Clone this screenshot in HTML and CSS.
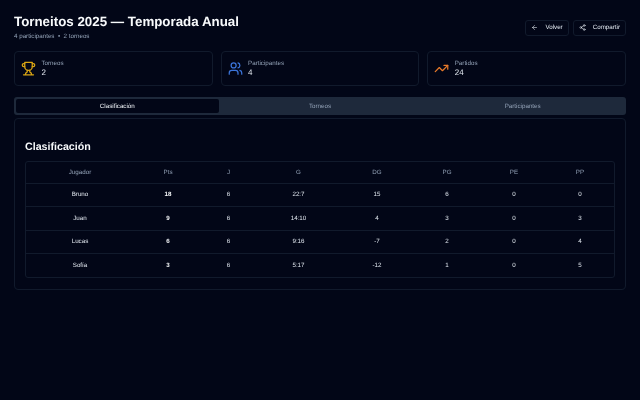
FILE: index.html
```html
<!DOCTYPE html>
<html lang="es">
<head>
<meta charset="utf-8">
<title>Torneitos 2025</title>
<link rel="stylesheet" href="styles.css">
</head>
<body>
<main class="page">
  <header class="top">
    <div class="heading">
      <h1>Torneitos 2025 — Temporada Anual</h1>
      <p>4 participantes &nbsp;•&nbsp; 2 torneos</p>
    </div>
    <div class="actions">
      <button class="btn"><svg class="ico-sm" viewBox="0 0 24 24"><path d="M19 12H5M12 19l-7-7 7-7"/></svg>Volver</button>
      <button class="btn"><svg class="ico-sm" viewBox="0 0 24 24"><circle cx="18" cy="5" r="3"/><circle cx="6" cy="12" r="3"/><circle cx="18" cy="19" r="3"/><path d="M8.600 13.500l6.800 4M15.400 6.500l-6.800 4"/></svg>Compartir</button>
    </div>
  </header>

  <section class="stats">
    <div class="card">
      <svg class="ico trophy" viewBox="0 0 24 24"><path d="M6 9H4.500a2.500 2.500 0 0 1 0-5H6M18 9h1.500a2.500 2.500 0 0 0 0-5H18M4 22h16M10 14.660V17c0 .55-.47.98-.97 1.210C7.850 18.750 7 20.240 7 22M14 14.660V17c0 .55.47.98.97 1.210C16.150 18.750 17 20.240 17 22"/><path d="M18 2H6v7a6 6 0 0 0 12 0V2z"/></svg>
      <div><div class="label">Torneos</div><div class="value">2</div></div>
    </div>
    <div class="card">
      <svg class="ico users" viewBox="0 0 24 24"><path d="M16 21v-2a4 4 0 0 0-4-4H6a4 4 0 0 0-4 4v2"/><circle cx="9" cy="7" r="4"/><path d="M22 21v-2a4 4 0 0 0-3-3.870M16 3.130a4 4 0 0 1 0 7.750"/></svg>
      <div><div class="label">Participantes</div><div class="value">4</div></div>
    </div>
    <div class="card">
      <svg class="ico trend" viewBox="0 0 24 24"><path d="M22 7l-8.500 8.500-5-5L2 17"/><path d="M16 7h6v6"/></svg>
      <div><div class="label">Partidos</div><div class="value">24</div></div>
    </div>
  </section>

  <nav class="tabs">
    <div class="tab active">Clasificación</div>
    <div class="tab">Torneos</div>
    <div class="tab">Participantes</div>
  </nav>

  <section class="panel">
    <h2>Clasificación</h2>
    <div class="table-wrap">
      <table>
        <colgroup>
          <col class="c1"><col class="c2"><col class="c3"><col class="c4"><col class="c5"><col class="c6"><col class="c7"><col class="c8">
        </colgroup>
        <thead>
          <tr><th>Jugador</th><th>Pts</th><th>J</th><th>G</th><th>DG</th><th>PG</th><th>PE</th><th>PP</th></tr>
        </thead>
        <tbody>
          <tr><td>Bruno</td><td class="pts">18</td><td>6</td><td>22:7</td><td>15</td><td>6</td><td>0</td><td>0</td></tr>
          <tr><td>Juan</td><td class="pts">9</td><td>6</td><td>14:10</td><td>4</td><td>3</td><td>0</td><td>3</td></tr>
          <tr><td>Lucas</td><td class="pts">6</td><td>6</td><td>9:16</td><td>-7</td><td>2</td><td>0</td><td>4</td></tr>
          <tr><td>Sofía</td><td class="pts">3</td><td>6</td><td>5:17</td><td>-12</td><td>1</td><td>0</td><td>5</td></tr>
        </tbody>
      </table>
    </div>
  </section>
</main>
</body>
</html>
```
FILE: styles.css
```css
* { box-sizing: border-box; }
html, body { margin: 0; height: 100%; }
body {
  background: #020617;
  color: #f8fafc;
  font-family: "Liberation Sans", Arial, sans-serif;
  text-rendering: geometricPrecision;
  overflow: hidden;
}
.page { padding: 14px; filter: blur(0.3px); }
.top {
  display: flex;
  justify-content: space-between;
  align-items: center;
  height: 27px;
  margin-bottom: 10px;
}
h1 {
  margin: 0 0 2px;
  font-size: 13.330px;
  line-height: 16px;
  font-weight: 700;
}
.heading p { margin: 0; font-size: 6.220px; line-height: 9px; color: #94a3b8; }
.actions { display: flex; gap: 4px; }
.btn {
  display: flex;
  align-items: center;
  gap: 7px;
  height: 16px;
  padding: 0 5px;
  background: #020617;
  border: 1px solid #111a2c;
  border-radius: 3px;
  color: #e2e8f0;
  font: 6.220px "Liberation Sans", Arial, sans-serif;
  text-rendering: geometricPrecision;
}
.ico-sm { width: 7px; height: 7px; fill: none; stroke: #e2e8f0; stroke-width: 2; stroke-linecap: round; stroke-linejoin: round; flex: none; }
.stats { display: grid; grid-template-columns: repeat(3, 1fr); gap: 8px; margin-bottom: 11px; }
.card {
  display: flex;
  align-items: center;
  gap: 5.400px;
  height: 35px;
  padding: 0 6px;
  border: 1px solid #111a2c;
  border-radius: 4px;
}
.ico { width: 15px; height: 15px; fill: none; stroke-width: 2; stroke-linecap: round; stroke-linejoin: round; flex: none; }
.trophy { stroke: #d9a514; }
.users { stroke: #3b74d9; }
.trend { stroke: #e87a2a; }
.label { font-size: 6.220px; line-height: 9px; color: #94a3b8; }
.value { font-size: 8px; line-height: 10px; color: #e2e8f0; }
.tabs {
  display: grid;
  grid-template-columns: repeat(3, 1fr);
  height: 18px;
  padding: 2px;
  background: #1e293b;
  border-radius: 3px;
  margin-bottom: 3px;
}
.tab {
  display: flex;
  align-items: center;
  justify-content: center;
  font-size: 6.220px;
  color: #94a3b8;
  border-radius: 2px;
}
.tab.active { background: #020617; color: #f1f5f9; }
.panel {
  height: 172px;
  padding: 21px 10px 0;
  border: 1px solid #111a2c;
  border-radius: 4px;
}
h2 { margin: 0 0 7px; font-size: 10.670px; line-height: 14px; font-weight: 700; }
.table-wrap { border: 1px solid #111a2c; border-radius: 3px; }
table { width: 100%; border-collapse: collapse; table-layout: fixed; }
.c1 { width: 108px; } .c2 { width: 68px; } .c3 { width: 53px; } .c4 { width: 87px; }
.c5 { width: 70px; } .c6 { width: 70px; } .c7 { width: 64px; } .c8 { width: 68px; }
th, td { text-align: center; font-size: 6.220px; padding: 0; }
th { height: 21px; font-weight: 400; color: #94a3b8; }
td { height: 23.600px; color: #e2e8f0; }
tr { border-bottom: 1px solid #111a2c; }
tbody tr:last-child { border-bottom: 0; }
.pts { font-weight: 700; color: #f8fafc; }
```
